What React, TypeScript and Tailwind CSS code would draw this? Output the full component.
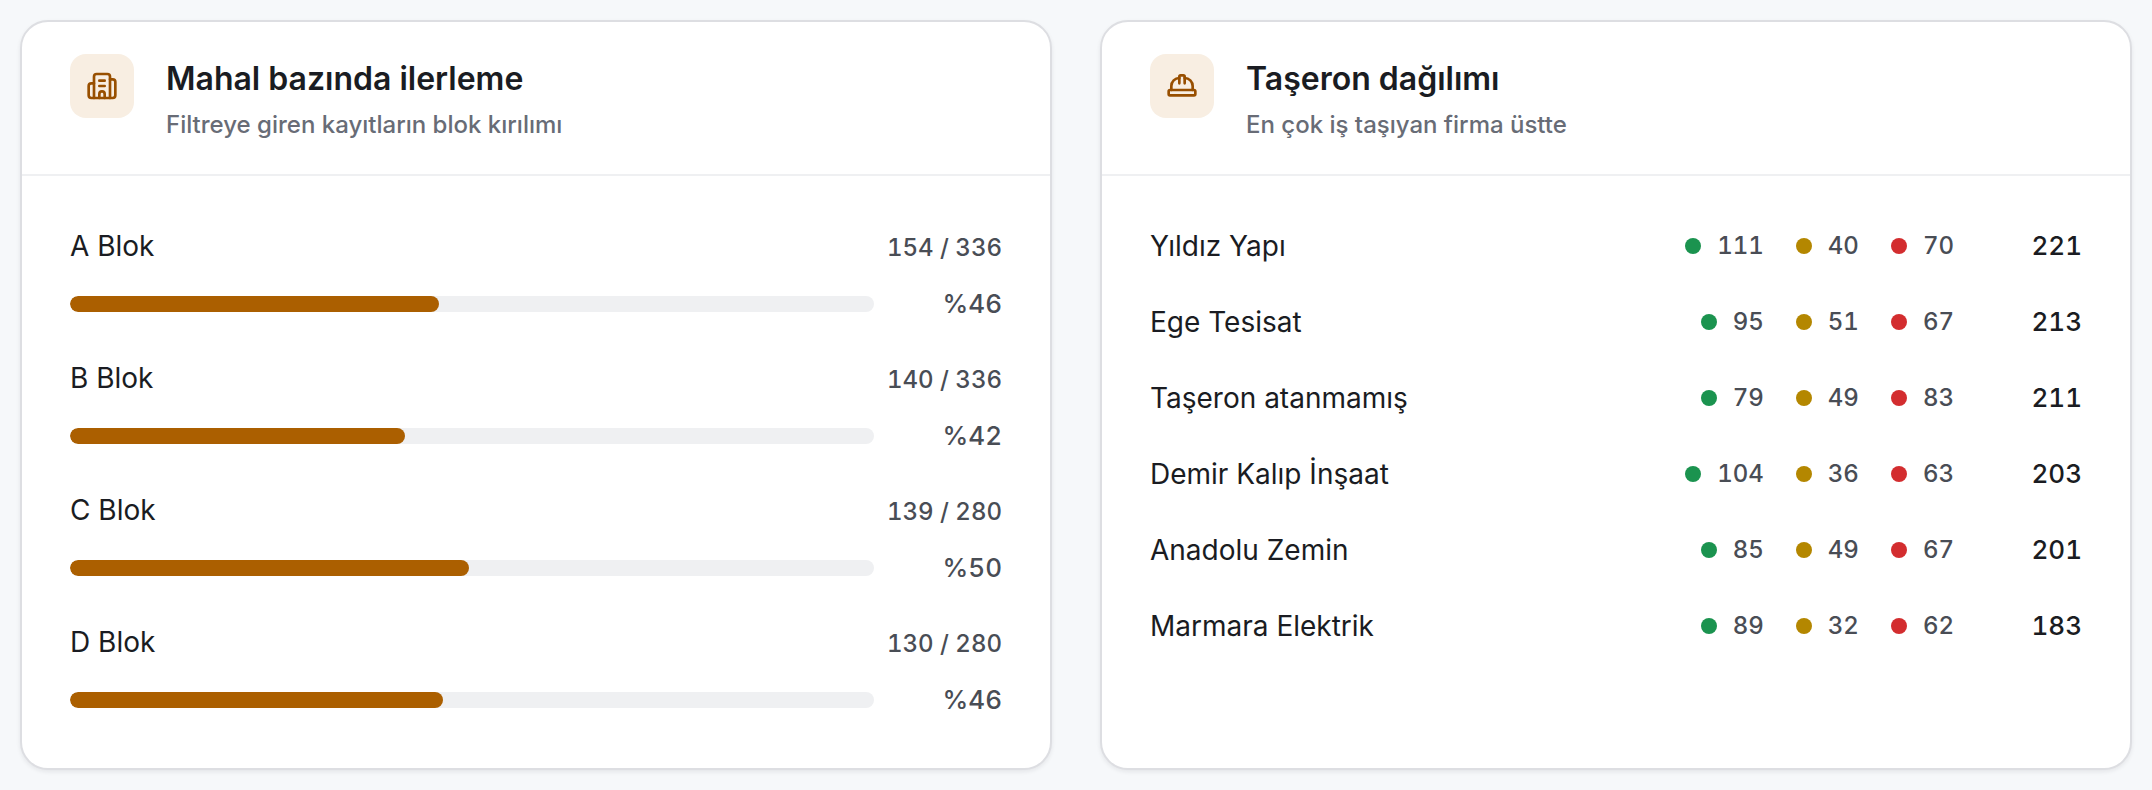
import React from "react";
import { Building2, HardHat, type LucideIcon } from "lucide-react";

type Block = {
  name: string;
  done: number;
  total: number;
};

type Contractor = {
  name: string;
  done: number;
  waiting: number;
  late: number;
  total: number;
};

const blocks: Block[] = [
  { name: "A Blok", done: 154, total: 336 },
  { name: "B Blok", done: 140, total: 336 },
  { name: "C Blok", done: 139, total: 280 },
  { name: "D Blok", done: 130, total: 280 },
];

const contractors: Contractor[] = [
  { name: "Yıldız Yapı", done: 111, waiting: 40, late: 70, total: 221 },
  { name: "Ege Tesisat", done: 95, waiting: 51, late: 67, total: 213 },
  { name: "Taşeron atanmamış", done: 79, waiting: 49, late: 83, total: 211 },
  { name: "Demir Kalıp İnşaat", done: 104, waiting: 36, late: 63, total: 203 },
  { name: "Anadolu Zemin", done: 85, waiting: 49, late: 67, total: 201 },
  { name: "Marmara Elektrik", done: 89, waiting: 32, late: 62, total: 183 },
];

type CardProps = {
  icon: LucideIcon;
  title: string;
  subtitle: string;
  children: React.ReactNode;
};

const Card: React.FC<CardProps> = ({ icon: Icon, title, subtitle, children }) => (
  <section className="flex flex-col rounded-[28px] border-2 border-[#dddee2] bg-white shadow-[0_2px_4px_rgba(20,24,36,0.08)]">
    <header className="flex items-start gap-8 border-b-2 border-[#eff0f2] px-12 pt-8 pb-8">
      <div className="flex size-16 shrink-0 items-center justify-center rounded-2xl bg-[#f8eee2] text-[#984f00]">
        <Icon size={32} />
      </div>
      <div className="min-w-0">
        <h2 className="text-[32px] leading-[50px] font-semibold text-[#1a1c22]">
          {title}
        </h2>
        <p className="mt-1 text-2xl leading-[34px] font-medium text-[#686c76]">
          {subtitle}
        </p>
      </div>
    </header>
    {children}
  </section>
);

const BlockRow: React.FC<{ block: Block }> = ({ block }) => {
  const percent = (block.done / block.total) * 100;

  return (
    <li className="flex flex-col gap-4">
      <div className="flex items-baseline justify-between">
        <span className="text-[28px] leading-[44px] text-[#1a1c22]">
          {block.name}
        </span>
        <span className="text-2xl font-medium text-[#494d55] tabular-nums">
          {block.done} / {block.total}
        </span>
      </div>
      <div className="flex items-center gap-8">
        <div className="h-4 flex-1 overflow-hidden rounded-full bg-[#eff0f2]">
          <div
            className="h-full rounded-full bg-[#ab5f00]"
            style={{ width: `${percent}%` }}
          />
        </div>
        <span className="w-24 text-right text-[26px] leading-10 font-medium text-[#494d55] tabular-nums">
          %{Math.round(percent)}
        </span>
      </div>
    </li>
  );
};

const Count: React.FC<{ dot: string; value: number }> = ({ dot, value }) => (
  <span className="flex items-center gap-4">
    <span className={`size-4 rounded-full ${dot}`} />
    {value}
  </span>
);

const ContractorRow: React.FC<{ contractor: Contractor }> = ({ contractor }) => (
  <li className="flex items-center gap-8 py-4">
    <span className="min-w-0 flex-1 truncate text-[28px] leading-[44px] text-[#1a1c22]">
      {contractor.name}
    </span>
    <div className="flex items-center gap-8 text-2xl font-medium text-[#494d55] tabular-nums">
      <Count dot="bg-[#1b934f]" value={contractor.done} />
      <Count dot="bg-[#b48700]" value={contractor.waiting} />
      <Count dot="bg-[#d32d2f]" value={contractor.late} />
    </div>
    <span className="w-24 text-right text-[26px] leading-10 font-medium text-[#1a1c22] tabular-nums">
      {contractor.total}
    </span>
  </li>
);

const App: React.FC = () => (
  <main className="grid min-h-screen grid-cols-2 content-start gap-12 bg-[#f6f8fa] p-5 font-['Inter',sans-serif]">
    <Card
      icon={Building2}
      title="Mahal bazında ilerleme"
      subtitle="Filtreye giren kayıtların blok kırılımı"
    >
      <ul className="flex flex-col gap-8 p-12">
        {blocks.map((block) => (
          <BlockRow key={block.name} block={block} />
        ))}
      </ul>
    </Card>
    <Card
      icon={HardHat}
      title="Taşeron dağılımı"
      subtitle="En çok iş taşıyan firma üstte"
    >
      <ul className="flex flex-col px-12 py-8">
        {contractors.map((contractor) => (
          <ContractorRow key={contractor.name} contractor={contractor} />
        ))}
      </ul>
    </Card>
  </main>
);

export default App;
